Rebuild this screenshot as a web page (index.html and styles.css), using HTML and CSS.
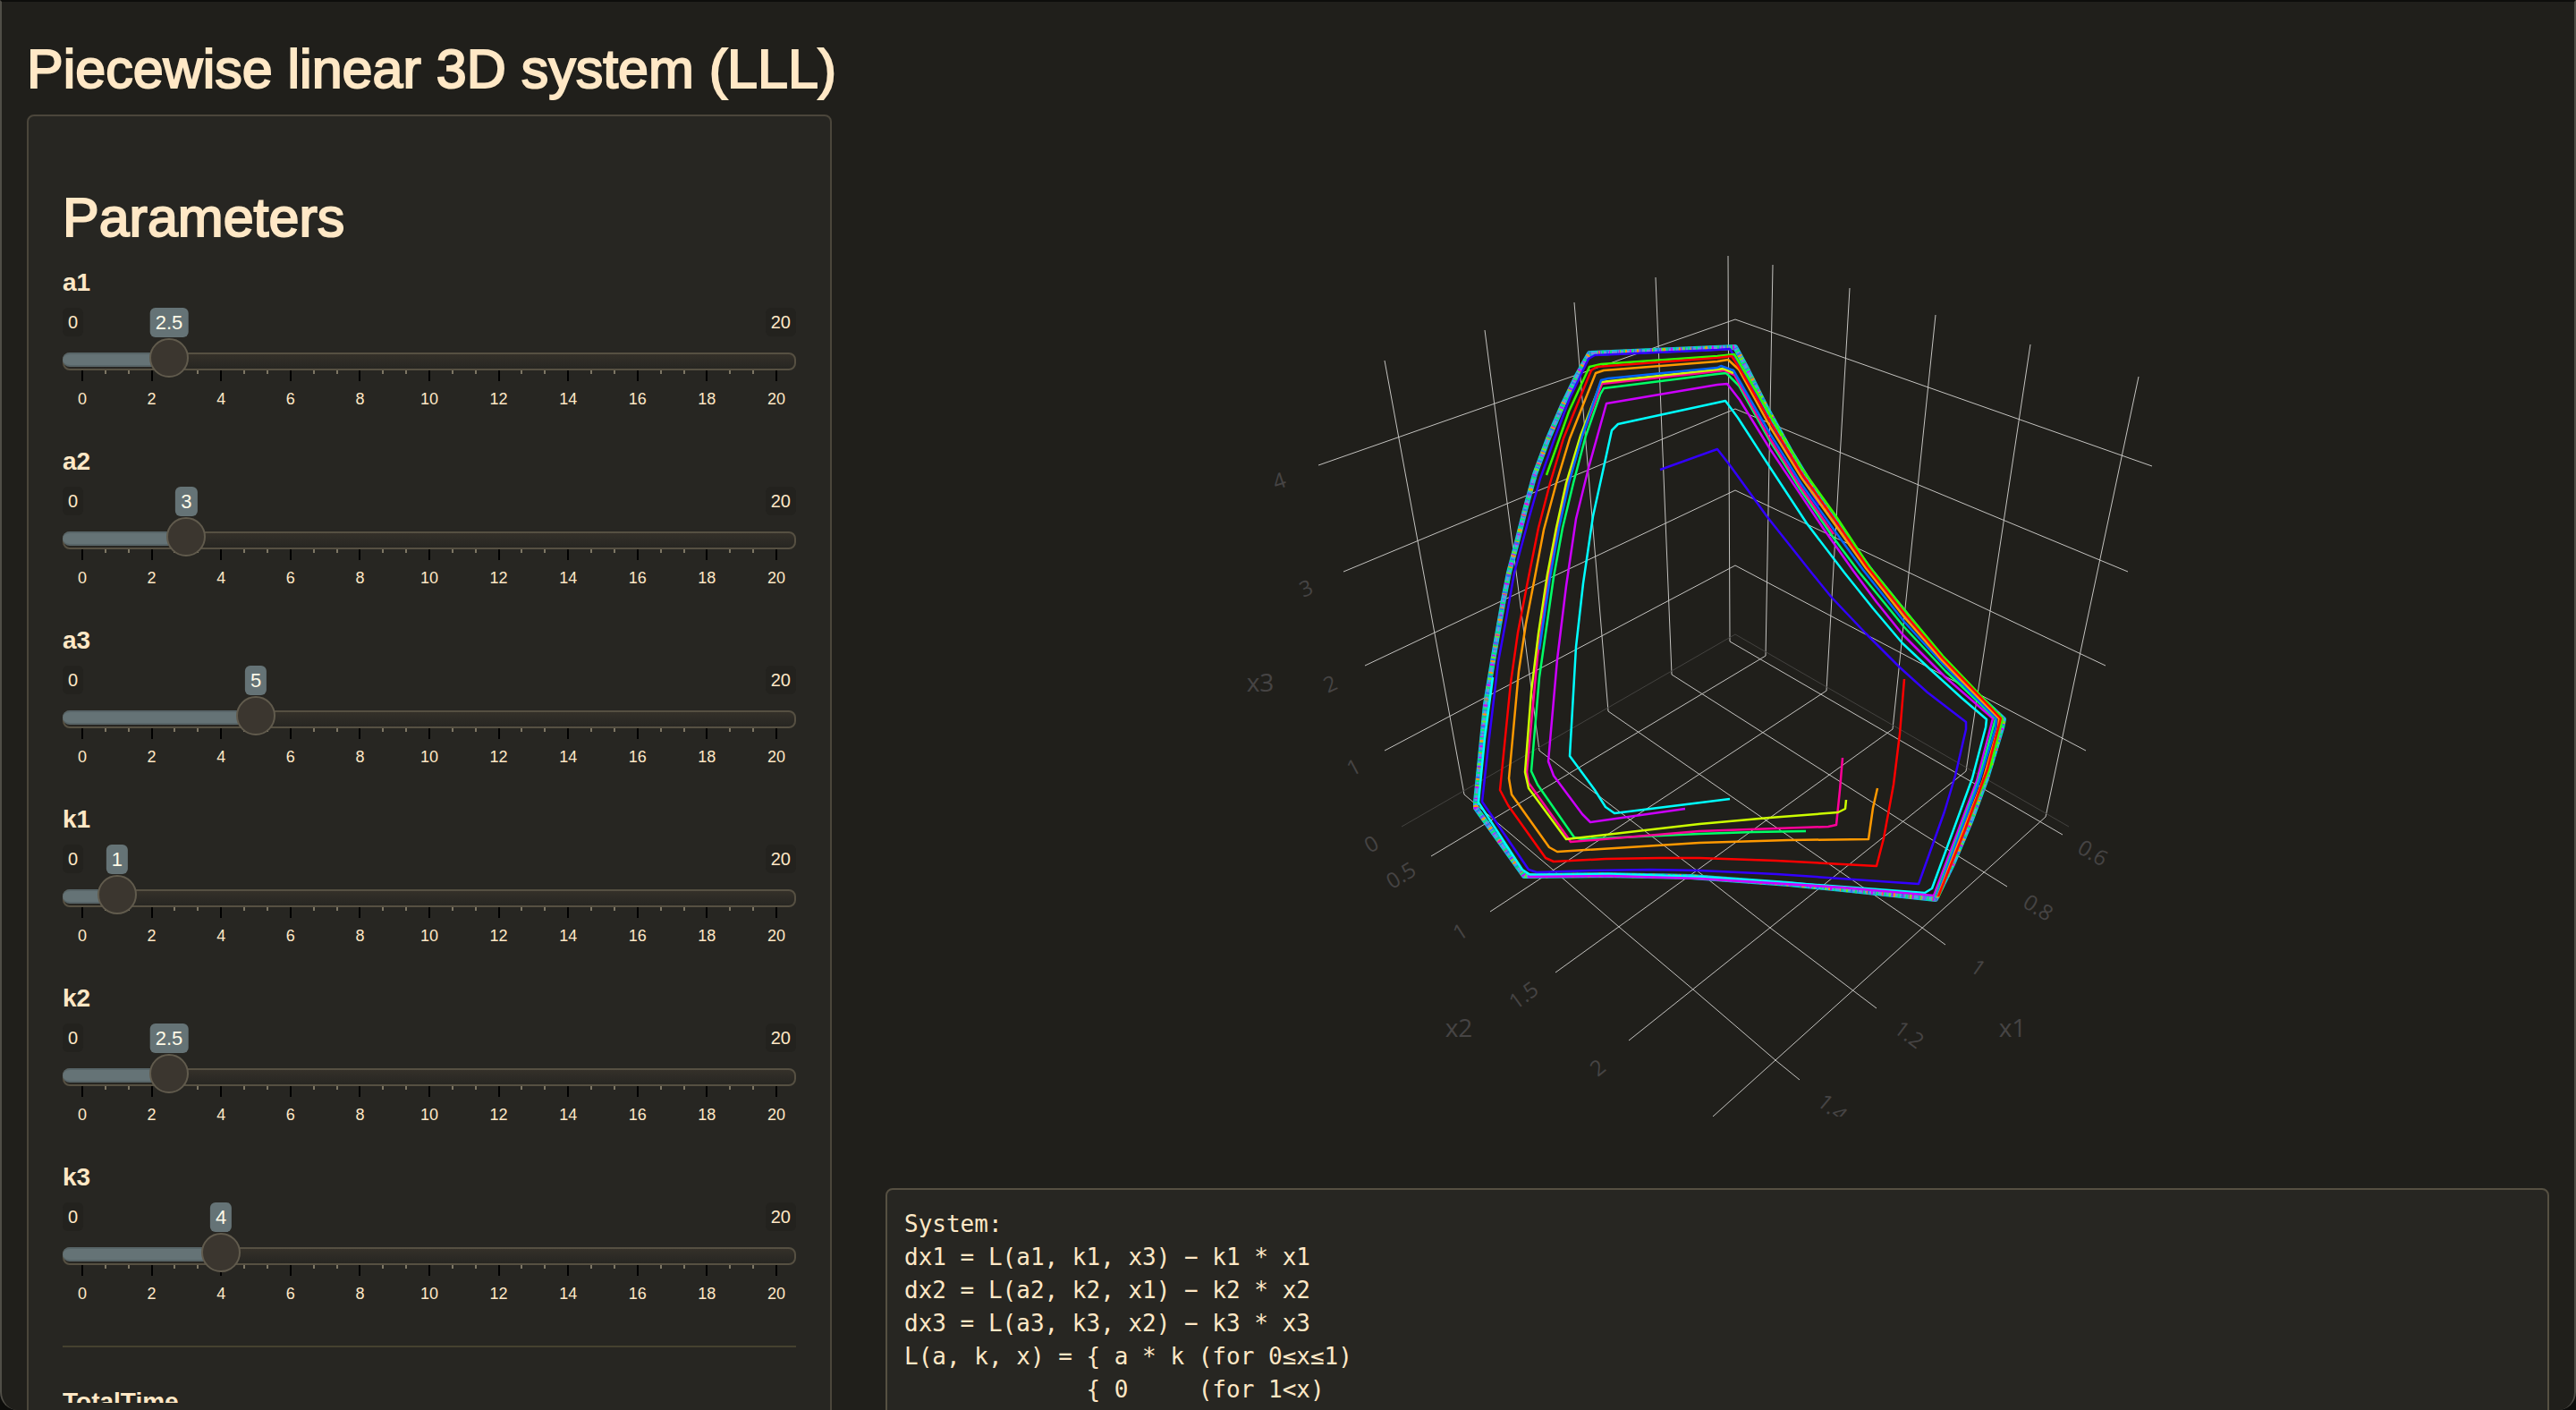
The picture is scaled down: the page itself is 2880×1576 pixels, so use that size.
FILE: index.html
```html
<!DOCTYPE html>
<html lang="en">
<head>
<meta charset="utf-8">
<title>Piecewise linear 3D system (LLL)</title>
<link rel="stylesheet" href="styles.css">
</head>
<body>
<div class="window">
<h1 class="title">Piecewise linear 3D system (LLL)</h1>
<main class="columns">
<form class="panel">
<h2 class="panel-title">Parameters</h2>

<div class="field" style="--value: 2.5">
<label class="field-label" for="a1">a1</label>
<div class="bounds"><span>0</span><span>20</span></div>
<div class="slider"><span class="fill"></span><input id="a1" type="range" min="0" max="20" step="0.1" value="2.5"><output class="bubble" for="a1">2.5</output></div>
<ul class="scale"><li>0</li><li>2</li><li>4</li><li>6</li><li>8</li><li>10</li><li>12</li><li>14</li><li>16</li><li>18</li><li>20</li></ul>
</div>

<div class="field" style="--value: 3">
<label class="field-label" for="a2">a2</label>
<div class="bounds"><span>0</span><span>20</span></div>
<div class="slider"><span class="fill"></span><input id="a2" type="range" min="0" max="20" step="0.1" value="3"><output class="bubble" for="a2">3</output></div>
<ul class="scale"><li>0</li><li>2</li><li>4</li><li>6</li><li>8</li><li>10</li><li>12</li><li>14</li><li>16</li><li>18</li><li>20</li></ul>
</div>

<div class="field" style="--value: 5">
<label class="field-label" for="a3">a3</label>
<div class="bounds"><span>0</span><span>20</span></div>
<div class="slider"><span class="fill"></span><input id="a3" type="range" min="0" max="20" step="0.1" value="5"><output class="bubble" for="a3">5</output></div>
<ul class="scale"><li>0</li><li>2</li><li>4</li><li>6</li><li>8</li><li>10</li><li>12</li><li>14</li><li>16</li><li>18</li><li>20</li></ul>
</div>

<div class="field" style="--value: 1">
<label class="field-label" for="k1">k1</label>
<div class="bounds"><span>0</span><span>20</span></div>
<div class="slider"><span class="fill"></span><input id="k1" type="range" min="0" max="20" step="0.1" value="1"><output class="bubble" for="k1">1</output></div>
<ul class="scale"><li>0</li><li>2</li><li>4</li><li>6</li><li>8</li><li>10</li><li>12</li><li>14</li><li>16</li><li>18</li><li>20</li></ul>
</div>

<div class="field" style="--value: 2.5">
<label class="field-label" for="k2">k2</label>
<div class="bounds"><span>0</span><span>20</span></div>
<div class="slider"><span class="fill"></span><input id="k2" type="range" min="0" max="20" step="0.1" value="2.5"><output class="bubble" for="k2">2.5</output></div>
<ul class="scale"><li>0</li><li>2</li><li>4</li><li>6</li><li>8</li><li>10</li><li>12</li><li>14</li><li>16</li><li>18</li><li>20</li></ul>
</div>

<div class="field" style="--value: 4">
<label class="field-label" for="k3">k3</label>
<div class="bounds"><span>0</span><span>20</span></div>
<div class="slider"><span class="fill"></span><input id="k3" type="range" min="0" max="20" step="0.1" value="4"><output class="bubble" for="k3">4</output></div>
<ul class="scale"><li>0</li><li>2</li><li>4</li><li>6</li><li>8</li><li>10</li><li>12</li><li>14</li><li>16</li><li>18</li><li>20</li></ul>
</div>

<hr class="divider">
<div class="field-label cut">TotalTime</div>
</form>

<section class="output">
<svg class="plot" viewBox="990 128 1860 1120" role="img" aria-label="Trajectories in x1, x2, x3">
<g class="grid">
<path d="M1548 403L1637 888L1736 972L1810 1036L1893 1106L1985 1185L2012 1207"/>
<path d="M1660 369L1721 839L1897 973L1979 1037L2098 1127"/>
<path d="M1760 338L1798 795L2057 974L2149 1037L2175 1056"/>
<path d="M1851 310L1869 754L2127 918L2244 991"/>
<path d="M1932 286L1934 717L2306 933"/>
<path d="M1982 296L1974 733L1600 957"/>
<path d="M2068 322L2042 772L1666 1019"/>
<path d="M2164 352L2116 815L1739 1087"/>
<path d="M2270 385L2198 862L1821 1163"/>
<path d="M2391 421L2287 913L1915 1248"/>
<path d="M1474 520L1940 357L2406 521"/>
<path d="M1502 639L1940 457L2379 639"/>
<path d="M1526 744L1940 548L2354 744"/>
<path d="M1548 839L1940 632L2332 839"/>
<path class="zero" d="M1567 924L1940 709L2313 924"/>
</g>
<g class="ticks">
<text transform="translate(1430 537) rotate(-19)" dy="9">4</text>
<text transform="translate(1460 657) rotate(-22)" dy="9">3</text>
<text transform="translate(1487 764) rotate(-25)" dy="9">2</text>
<text transform="translate(1513 857) rotate(-28)" dy="9">1</text>
<text transform="translate(1533 943) rotate(-30)" dy="9">0</text>
<text transform="translate(1566 978) rotate(-31)" dy="9">0.5</text>
<text transform="translate(1632 1041) rotate(-33)" dy="9">1</text>
<text transform="translate(1703 1112) rotate(-36)" dy="9">1.5</text>
<text transform="translate(1786 1193) rotate(-39)" dy="9">2</text>
<text transform="translate(2340 953) rotate(30)" dy="9">0.6</text>
<text transform="translate(2279 1014) rotate(32)" dy="9">0.8</text>
<text transform="translate(2212 1081) rotate(35)" dy="9">1</text>
<text transform="translate(2135 1156) rotate(37)" dy="9">1.2</text>
<text transform="translate(2049 1238) rotate(40)" dy="9">1.4</text>
</g>
<g class="axis-names">
<text x="1409" y="773">x3</text>
<text x="1631" y="1159">x2</text>
<text x="2250" y="1159">x1</text>
</g>
<defs>
<path id="cycle" d="M1777 395L1940 388L1953 412L1975 456L2001 503L2035 559L2070 609L2094 641L2128 683L2170 735L2198 765L2240 804L2238 814L2221 870L2204 916L2183 966L2164 1005L2060 994L2000 988L1890 980L1793 978L1704 979L1650 903L1650 896L1655 847L1661 787L1670 733L1681 670L1687 640L1695 610L1705 570L1716 530L1731 490L1747 453L1763 420Z"/>
</defs>
<g class="traces">
<use class="band" href="#cycle"/>
<use class="band-violet" href="#cycle"/>
<use class="speck s1" href="#cycle"/>
<use class="speck s2" href="#cycle"/>
<use class="speck s3" href="#cycle"/>
<use class="speck s4" href="#cycle"/>
<use class="speck s5" href="#cycle"/>
<path stroke="#3300ff" d="M1856 525L1920 502L1934 520L1976 578L2026 641L2048 668L2086 708L2124 746L2155 774L2198 807L2198 815L2186 867L2174 907L2145 988L1986 977L1900 973L1845 972L1780 973L1718 975L1709 972L1657 896L1664 833L1675 740L1683 697L1693 640L1710 577L1722 535L1738 490L1755 445L1776 401L1783 397L1920 391L1934 390L1950 416L1974 462L2000 509L2034 565"/>
<path stroke="#00ffff" d="M1934 893L1805 909L1795 902L1783 883L1755 845L1762 723L1770 652L1781 577L1802 481L1809 474L1920 450L1929 448L1943 467L1976 518L2020 585L2062 640L2094 680L2127 719L2160 750L2193 780L2221 804L2220 813L2205 870L2182 933L2160 993L2152 998L1990 986L1900 980L1800 977L1711 978L1702 972L1653 897L1660 825L1669 757"/>
<path stroke="#cc00ff" d="M1884 904L1778 919L1769 910L1737 867L1731 851L1741 737L1751 655L1762 580L1776 523L1796 451L1920 430L1931 429L1945 447L1979 502L2038 590L2072 638L2098 673L2127 709L2175 757L2228 803L2210 873L2162 1001L2060 992L1900 982L1800 979L1708 980"/>
<path stroke="#00ff66" d="M2019 929L1960 930L1900 932L1769 938L1760 936L1719 877L1712 862L1721 757L1737 645L1747 590L1759 540L1773 487L1789 441L1793 434L1920 418L1930 417L1944 431L1977 490L2012 546L2049 600L2079 640L2129 701L2175 750L2231 803L2212 873L2164 1002"/>
<path stroke="#ff0099" d="M2060 847L2057 883L2053 922L2044 924L1900 929L1756 941L1752 935L1709 875L1707 863L1719 733L1732 642L1742 590L1753 540L1769 487L1791 429L1920 415L1928 414L1939 419L1978 489L2013 544L2050 597"/>
<path stroke="#ccff00" d="M2064 894L2063 904L2055 908L1978 914L1900 921L1751 938L1709 881L1705 863L1712 773L1720 708L1730 642L1740 590L1751 540L1767 487L1790 427L1920 413L1927 412L1938 417"/>
<path stroke="#0066ff" d="M1721 726L1733 645L1743 590L1754 540L1769 487L1790 425L1798 423L1920 411L1924 409L1938 414L1979 485L2014 541L2051 593L2083 637L2129 695L2172 742L2210 781L2232 803L2231 814L2213 873L2189 938L2165 1002"/>
<path stroke="#33ff00" d="M1729 531L1740 500L1754 460L1777 410L1790 407L1920 398L1939 396L1979 464L2014 523L2052 576L2089 632L2131 684L2172 733L2213 776L2239 803L2226 855L2196 930L2167 1003"/>
<path stroke="#ff9900" d="M2099 881L2094 903L2089 938L2000 939L1900 942L1741 952L1732 947L1690 888L1687 870L1698 750L1706 697L1716 645L1726 592L1740 540L1755 490L1784 417L1793 414L1920 404L1932 402L1944 413L1979 477L2014 534L2052 587L2086 635L2130 691L2172 739L2211 779L2235 803L2234 813L2217 872L2192 936L2166 1003"/>
<path stroke="#ff0000" d="M2129 759L2124 820L2117 877L2106 937L2098 968L1986 962L1900 959L1855 959L1795 960L1737 963L1728 959L1686 900L1677 883L1689 763L1697 707L1708 650L1720 590L1733 540L1748 490L1779 414L1785 410L1920 400L1936 398L1945 412L1979 471L2014 529L2052 582L2088 634L2131 688L2172 736L2212 777L2237 803L2222 860L2196 930L2167 1002"/>
</g>
</svg>
<pre class="system">System:
dx1 = L(a1, k1, x3) − k1 * x1
dx2 = L(a2, k2, x1) − k2 * x2
dx3 = L(a3, k3, x2) − k3 * x3
L(a, k, x) = { a * k (for 0≤x≤1)
             { 0     (for 1&lt;x)</pre>
</section>
</main>
</div>
</body>
</html>
```
FILE: styles.css
```css
* { box-sizing: border-box; }

body {
  margin: 0;
  background: #0d0d0b;
  color: #ffe8c6;
  font-family: "Liberation Sans", Arial, sans-serif;
}

.window {
  height: 100vh;
  overflow: hidden;
  padding: 42px 28px 0;
  background: #201f1b;
  border: solid #504e47;
  border-width: 0 2px;
  border-top: 2px solid #0d0d0b;
  border-radius: 0 0 20px 20px;
}

.title, .panel-title {
  margin: 0;
  font-size: 61px;
  line-height: 66px;
  font-weight: 400;
  -webkit-text-stroke: 2px currentColor;
}

.title { margin-bottom: 18px; }
.panel-title { margin-bottom: 19px; }

.columns {
  display: grid;
  grid-template-columns: minmax(0, 15fr) minmax(0, 31fr);
  column-gap: 60px;
  align-items: start;
}

.panel {
  padding: 80px 38px 40px;
  background: #272622;
  border: 2px solid #4b463b;
  border-radius: 8px;
}

.field { padding-bottom: 37px; }

.field-label {
  display: block;
  margin-bottom: 7px;
  font-size: 28px;
  line-height: 42px;
  font-weight: 700;
}

.bounds {
  display: flex;
  justify-content: space-between;
  align-items: flex-start;
  height: 34px;
}

.bounds span {
  padding: 0 6px;
  background: #23221e;
  border-radius: 6px;
  font-size: 20px;
  line-height: 32px;
}

.slider {
  position: relative;
  height: 44px;
}

.slider::before, .fill {
  content: "";
  position: absolute;
  top: 16px;
  left: 0;
  height: 16px;
  border-radius: 8px;
}

.slider::before {
  right: 0;
  background: linear-gradient(#343029, #272622);
  border: 2px solid #565042;
}

.fill {
  width: calc(22px + (100% - 44px) * var(--value) / 20);
  background: #657376;
  border: solid #586568;
  border-width: 2px 0;
  border-radius: 8px 0 0 8px;
}

.slider input {
  position: relative;
  z-index: 1;
  display: block;
  width: 100%;
  height: 44px;
  margin: 0;
  background: transparent;
  appearance: none;
}

.slider input::-webkit-slider-thumb {
  width: 44px;
  height: 44px;
  background: #3b362f;
  border: 2px solid #615b4d;
  border-radius: 50%;
  appearance: none;
}

.bubble {
  position: absolute;
  bottom: 100%;
  left: calc(22px + (100% - 44px) * var(--value) / 20);
  margin-bottom: 1px;
  padding: 0 6px;
  transform: translateX(-50%);
  background: #657376;
  border-radius: 6px;
  color: #fffbe8;
  font-size: 22px;
  line-height: 33px;
}

.scale {
  display: flex;
  justify-content: space-between;
  height: 48px;
  margin: -12px 21px 0;
  padding: 0;
  list-style: none;
  font-size: 18px;
  line-height: 20px;
  background: repeating-linear-gradient(to right, #7d7664 0 2px, transparent 2px calc((100% - 2px) / 30)) 0 0 / 100% 8px no-repeat;
}

.scale li {
  display: flex;
  flex-direction: column;
  align-items: center;
  gap: 10px;
  width: 2px;
}

.scale li::before {
  content: "";
  flex: none;
  width: 2px;
  height: 16px;
  background: #000;
}

.divider {
  height: 2px;
  margin: 9px 0 40px;
  background: #45412f;
  border: 0;
}

.cut {
  height: 22px;
  overflow: hidden;
}

.plot {
  display: block;
  width: 100%;
  height: auto;
  margin-bottom: 80px;
}

.grid path {
  fill: none;
  stroke: #c4c3c0;
  stroke-width: 1;
}

.grid .zero { stroke: #444340; }

.ticks, .axis-names {
  fill: #464444;
  font-family: "Open Sans", sans-serif;
  font-size: 24px;
  text-anchor: middle;
}

.axis-names { font-size: 28px; }

.traces {
  fill: none;
  stroke-width: 2.5;
  stroke-linejoin: round;
}

.band { stroke: #14c4dc; stroke-width: 6; }
.band-violet { stroke: #8a80dc; stroke-width: 2; }
.speck { stroke-width: 5; }
.s1 { stroke: #66f020; stroke-dasharray: 1 8 2 13; }
.s2 { stroke: #ff9900; stroke-dasharray: 2 15 2 11; stroke-dashoffset: 7; }
.s3 { stroke: #cc00ff; stroke-dasharray: 1 11 2 9; stroke-dashoffset: 13; }
.s4 { stroke: #2a78ee; stroke-dasharray: 2 10 1 6; stroke-dashoffset: 19; }
.s5 { stroke: #00e880; stroke-dasharray: 2 13 2 7; stroke-dashoffset: 25; }

.system {
  margin: 0;
  padding: 20px 19px;
  background: #272622;
  border: 2px solid #565042;
  border-radius: 8px;
  font-family: "DejaVu Sans Mono", monospace;
  font-size: 26px;
  line-height: 37px;
}
```
